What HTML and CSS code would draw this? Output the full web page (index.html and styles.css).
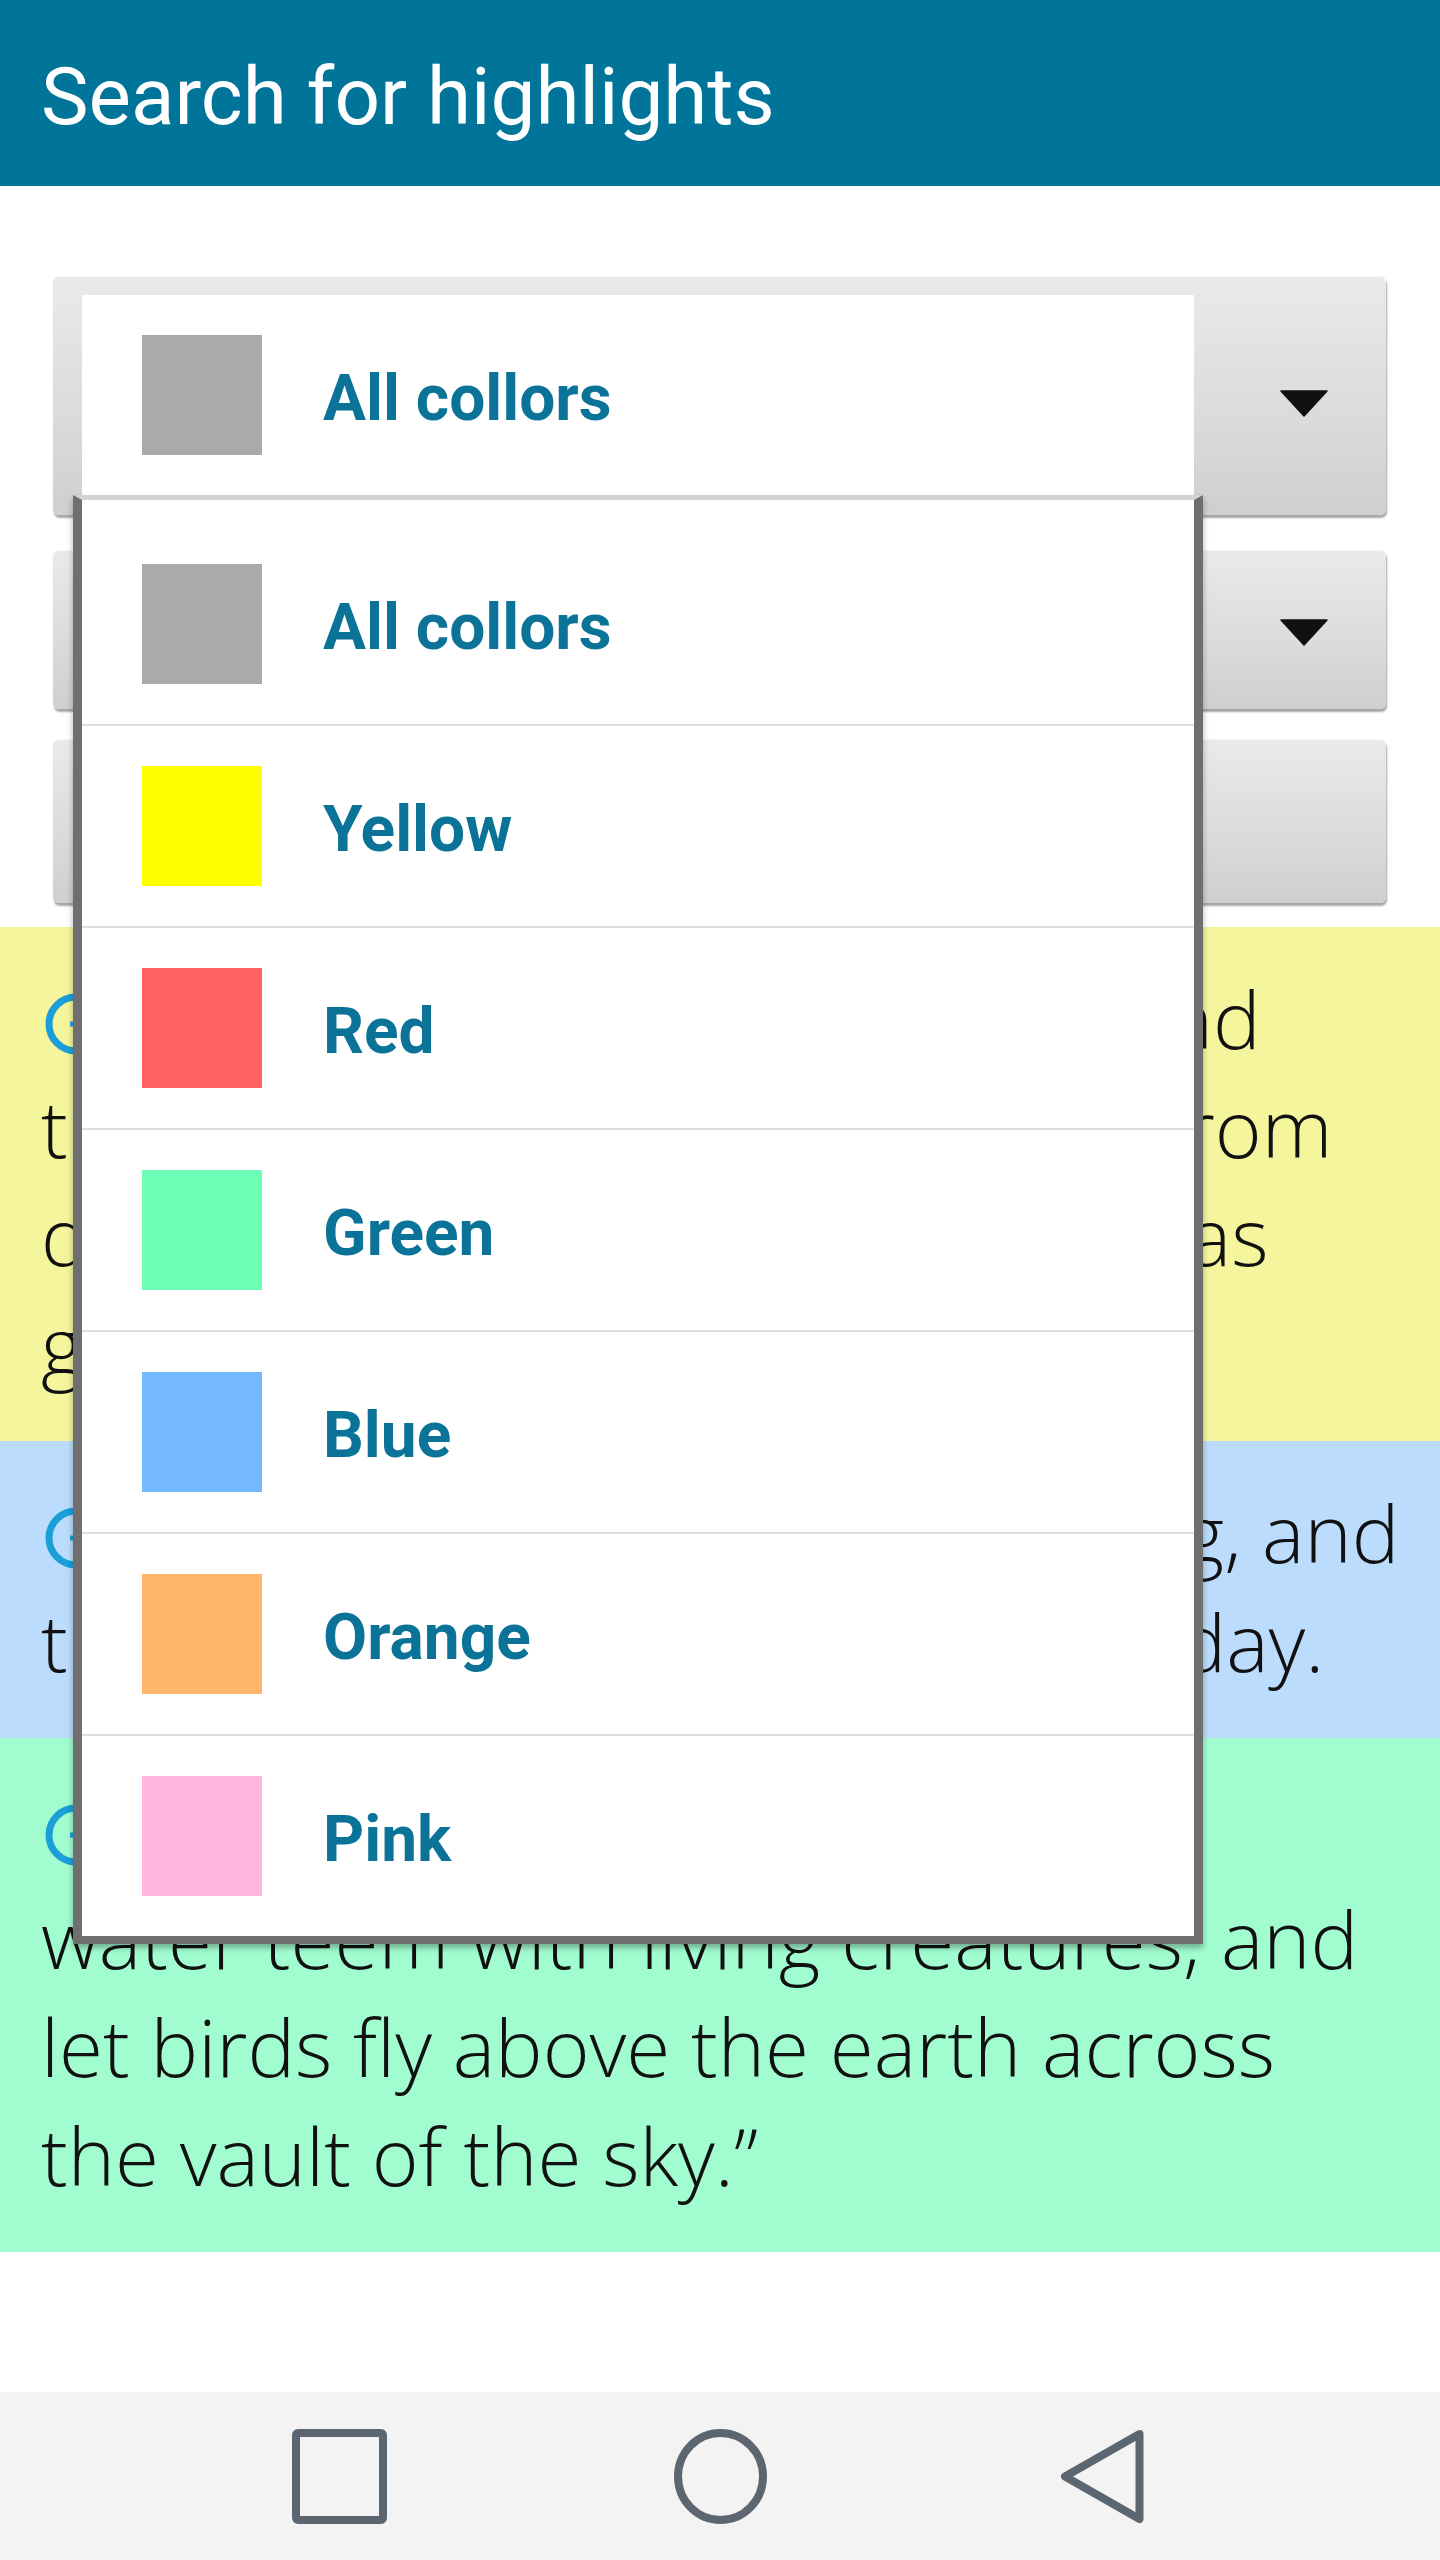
FILE: index.html
```html
<!DOCTYPE html>
<html lang="en">
<head>
<meta charset="utf-8">
<title>Search for highlights</title>
<link rel="stylesheet" href="styles.css">
</head>
<body>
<div class="page">
  <header class="appbar">
    <h1 class="title">Search for highlights</h1>
  </header>

  <main class="main">
    <section class="filters">
      <div class="spinner spinner-open">
        <div class="selected">
          <div class="row">
            <span class="swatch sw-gray"></span>
            <span class="label">All collors</span>
          </div>
        </div>
        <div class="arrow-cell arrow-open">
          <svg class="arrow" viewBox="0 0 48 27"><path d="M1 1 H47 L24 26 Z" fill="#111" stroke="#111" stroke-width="1.5" stroke-linejoin="round"/></svg>
        </div>
      </div>
      <div class="spinner spinner-second">
        <div class="spinner-text">All books</div>
        <div class="arrow-cell arrow-second">
          <svg class="arrow" viewBox="0 0 48 27"><path d="M1 1 H47 L24 26 Z" fill="#111" stroke="#111" stroke-width="1.5" stroke-linejoin="round"/></svg>
        </div>
      </div>
      <div class="spinner spinner-button">
        <div class="spinner-text">Search</div>
      </div>
    </section>

    <section class="results">
      <p class="hl hl-yellow"><svg class="mark" viewBox="0 0 62 62"><circle cx="31" cy="31" r="27" fill="none" stroke="#1a9fd8" stroke-width="7"/><path d="M25 31 H37" stroke="#1a9fd8" stroke-width="5"/></svg> Gen 1:18 to govern the day and<br>the night, and to separate light from<br>darkness. And God saw that it was<br>good.</p>
      <p class="hl hl-blue"><svg class="mark" viewBox="0 0 62 62"><circle cx="31" cy="31" r="27" fill="none" stroke="#1a9fd8" stroke-width="7"/><path d="M25 31 H37" stroke="#1a9fd8" stroke-width="5"/></svg> Gn1:19 And there was evening, and<br>there was morning—the fourth day.</p>
      <p class="hl hl-green"><svg class="mark" viewBox="0 0 62 62"><circle cx="31" cy="31" r="27" fill="none" stroke="#1a9fd8" stroke-width="7"/><path d="M25 31 H37" stroke="#1a9fd8" stroke-width="5"/></svg> Gen 1:20 And God said, “Let<br>water teem with living creatures, and<br>let birds fly above the earth across<br>the vault of the sky.”</p>
    </section>
  </main>

  <div class="dropdown">
    <div class="row"><span class="swatch sw-gray"></span><span class="label">All collors</span></div>
    <div class="row"><span class="swatch sw-yellow"></span><span class="label">Yellow</span></div>
    <div class="row"><span class="swatch sw-red"></span><span class="label">Red</span></div>
    <div class="row"><span class="swatch sw-green"></span><span class="label">Green</span></div>
    <div class="row"><span class="swatch sw-blue"></span><span class="label">Blue</span></div>
    <div class="row"><span class="swatch sw-orange"></span><span class="label">Orange</span></div>
    <div class="row"><span class="swatch sw-pink"></span><span class="label">Pink</span></div>
  </div>

  <nav class="navbar">
    <svg class="nav-icon" viewBox="0 0 95 95"><rect x="4" y="4" width="87" height="87" rx="2" fill="none" stroke="#5b6670" stroke-width="8"/></svg>
    <svg class="nav-icon" viewBox="0 0 95 95"><ellipse cx="47.5" cy="47.5" rx="42.5" ry="43.5" fill="none" stroke="#5b6670" stroke-width="8"/></svg>
    <svg class="nav-icon" viewBox="0 0 95 95"><path d="M85.5 5 L11 47.5 L85.5 90 Z" fill="none" stroke="#5b6670" stroke-width="8" stroke-linejoin="round"/></svg>
  </nav>
</div>
</body>
</html>
```

FILE: styles.css
```css
* { box-sizing: border-box; }

html, body {
  margin: 0;
  padding: 0;
  background: #ffffff;
}

.page {
  position: relative;
  width: 1440px;
  min-height: 2560px;
  display: flex;
  flex-direction: column;
  font-family: Roboto, "Liberation Sans", Arial, sans-serif;
}

.appbar {
  height: 186px;
  background: #017599;
  padding: 9px 0 0 41px;
}

.title {
  margin: 0;
  font-family: Roboto, "Liberation Sans", Arial, sans-serif;
  font-weight: 400;
  font-size: 80px;
  line-height: 177px;
  color: #ffffff;
}

.main {
  display: flex;
  flex-direction: column;
}

.filters {
  display: flex;
  flex-direction: column;
  padding: 90px 54px 0 53px;
}

.spinner {
  display: flex;
  align-items: stretch;
  border-radius: 6px;
  background: linear-gradient(180deg, #eaeaea 0%, #dcdcdc 55%, #cfcfcf 100%);
  box-shadow: 1px 3px 2px rgba(0, 0, 0, 0.35), inset 0 1px 0 rgba(255, 255, 255, 0.6);
}

.spinner-open {
  height: 239px;
  padding: 19px 0 20px 29px;
}

.spinner-second {
  margin-top: 35px;
  height: 159px;
}

.spinner-button {
  margin-top: 30px;
  height: 164px;
}

.spinner-text {
  flex: 1;
  display: flex;
  align-items: center;
  padding-left: 270px;
  font-size: 64px;
  font-weight: 700;
  color: #0b7397;
}

.selected {
  width: 1112px;
  height: 200px;
  background: #ffffff;
}

.arrow-cell {
  flex: 1;
  display: flex;
  justify-content: flex-end;
  align-items: center;
  padding-right: 58px;
}

.arrow-open { padding-top: 16px; }
.arrow-second { padding-top: 6px; }

.arrow {
  width: 48px;
  height: 27px;
  display: block;
}

.row {
  display: flex;
  align-items: center;
  height: 200px;
  padding-left: 60px;
}

.swatch {
  width: 120px;
  height: 120px;
  flex: none;
}

.label {
  margin-left: 61px;
  padding-top: 6px;
  font-family: Roboto, "Liberation Sans", Arial, sans-serif;
  font-weight: 700;
  font-size: 64px;
  color: #0b7397;
}

.sw-gray { background: #aaaaaa; }
.sw-yellow { background: #ffff00; }
.sw-red { background: #ff6262; }
.sw-green { background: #6cffb6; }
.sw-blue { background: #74b9ff; }
.sw-orange { background: #ffb66a; }
.sw-pink { background: #ffb5df; }

.results {
  margin-top: 24px;
  display: flex;
  flex-direction: column;
}

.hl {
  margin: 0;
  padding: 37px 20px 43px 41px;
  font-family: "Open Sans", "DejaVu Sans", sans-serif;
  font-weight: 300;
  font-size: 80px;
  line-height: 108.5px;
  color: #111111;
  white-space: nowrap;
}

.hl-yellow { background: #f5f59d; }
.hl-blue { background: #bbdcfc; }
.hl-green { background: #a1fdd0; }

.mark {
  width: 62px;
  height: 62px;
  margin-left: 4px;
  vertical-align: -6px;
}

.dropdown {
  position: absolute;
  top: 495px;
  left: 73px;
  width: 1130px;
  padding-top: 24px;
  background: #ffffff;
  border-top: 5px solid #d3d3d3;
  border-left: 9px solid #6f6f6f;
  border-right: 9px solid #6f6f6f;
  border-bottom: 8px solid #6f6f6f;
  box-shadow: 0 4px 6px rgba(0, 0, 0, 0.3);
}

.dropdown .row {
  padding-left: 60px;
}

.dropdown .row + .row {
  border-top: 2px solid #dedede;
  height: 202px;
}

.navbar {
  margin-top: auto;
  height: 168px;
  background: #f3f3f3;
  display: flex;
  justify-content: center;
  align-items: center;
  gap: 286px;
}

.nav-icon {
  width: 95px;
  height: 95px;
  display: block;
}
```
